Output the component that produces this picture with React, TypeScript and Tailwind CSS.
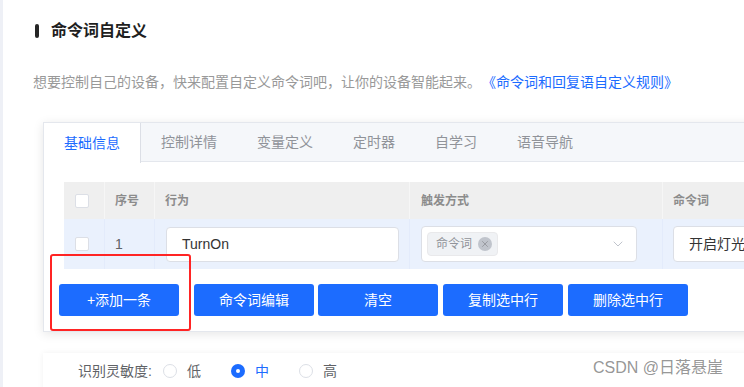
import { ChevronDown, X } from "lucide-react"

const tabs = ["基础信息", "控制详情", "变量定义", "定时器", "自学习", "语音导航"]
const buttons = ["+添加一条", "命令词编辑", "清空", "复制选中行", "删除选中行"]
const levels = [
  { label: "低", checked: false },
  { label: "中", checked: true },
  { label: "高", checked: false },
]

function Checkbox() {
  return <span className="block h-[14px] w-[14px] rounded-[2px] border border-[#dcdfe6] bg-white" />
}

function Radio({ checked }: { checked: boolean }) {
  if (checked) {
    return (
      <span className="flex h-[14px] w-[14px] items-center justify-center rounded-full bg-[#1c6cff]">
        <span className="h-[4px] w-[4px] rounded-full bg-white" />
      </span>
    )
  }
  return <span className="block h-[14px] w-[14px] rounded-full border border-[#dcdfe6] bg-white" />
}

export default function App() {
  return (
    <div className="relative flex h-[387px] w-[744px] overflow-hidden bg-white font-['Liberation_Sans','Noto_Sans_CJK_SC',sans-serif]">
      <div className="w-[3px] shrink-0 bg-[#eef0f6]" />

      <div className="min-w-0 flex-1 pl-[30px]">
        {/* title */}
        <div className="mt-[22px] flex h-[18px] items-center">
          <span className="ml-[2px] h-[14px] w-[4px] rounded-full bg-[#262626]" />
          <span className="ml-[12px] text-[16px] font-bold leading-[18px] text-[#1f1f1f]">命令词自定义</span>
        </div>

        <p className="mt-[32px] whitespace-nowrap text-[14px] leading-[20px] text-[#999]">
          想要控制自己的设备，快来配置自定义命令词吧，让你的设备智能起来。
          <span className="ml-[8px] text-[#1c6cff]">《命令词和回复语自定义规则》</span>
        </p>

        {/* tab card */}
        <div className="mt-[30px] ml-[10px] w-[780px] border border-[#e4e7ed] bg-white shadow-[0_2px_10px_0_rgba(0,0,0,0.1)]">
          <div className="flex h-[39px] border-b border-[#e4e7ed] bg-[#f5f7fa]">
            {tabs.map((tab, i) => (
              <div
                key={tab}
                className={
                  i === 0
                    ? "-mb-px flex h-[40px] items-center border-r border-[#dcdfe6] bg-white px-5 text-[14px] text-[#1c6cff]"
                    : "flex items-center px-5 text-[14px] text-[#909399]"
                }
              >
                {tab}
              </div>
            ))}
          </div>

          <div className="pt-[20px] pb-[15px]">
            {/* table */}
            <div className="ml-[20px]">
              <div className="flex h-[37px] bg-[#efefef] text-[12px] font-bold text-[#8c8c8c]">
                <div className="flex w-[41px] shrink-0 items-center border-r border-[#f6f6f6] pl-[11px]">
                  <Checkbox />
                </div>
                <div className="flex w-[50px] shrink-0 items-center border-r border-[#f6f6f6] pl-[10px]">序号</div>
                <div className="flex w-[255px] shrink-0 items-center border-r border-[#f6f6f6] pl-[10px]">行为</div>
                <div className="flex w-[253px] shrink-0 items-center border-r border-[#f6f6f6] pl-[11px]">触发方式</div>
                <div className="flex flex-1 items-center pl-[10px]">命令词</div>
              </div>

              <div className="flex h-[50px] bg-[#eaf1fd] text-[14px]">
                <div className="flex w-[41px] shrink-0 items-center border-r border-[#e3ebfb] pl-[11px]">
                  <Checkbox />
                </div>
                <div className="flex w-[50px] shrink-0 items-center border-r border-[#e3ebfb] pl-[10px] text-[#606266]">1</div>
                <div className="flex w-[255px] shrink-0 items-center border-r border-[#e3ebfb] pl-[11px]">
                  <div className="flex h-[35px] w-[233px] items-center rounded-[4px] border border-[#dcdfe6] bg-white px-[15px] text-[#333]">
                    TurnOn
                  </div>
                </div>
                <div className="flex w-[253px] shrink-0 items-center border-r border-[#e3ebfb] pl-[11px]">
                  <div className="flex h-[36px] w-[216px] items-center rounded-[4px] border border-[#dcdfe6] bg-white pl-[5px] pr-[10px]">
                    <span className="flex h-[24px] items-center rounded-[4px] border border-[#e9e9eb] bg-[#f0f2f5] pl-[8px] pr-[5px] text-[12px] text-[#909399]">
                      命令词
                      <span className="ml-[6px] flex h-[14px] w-[14px] items-center justify-center rounded-full bg-[#c0c4cc]">
                        <X size={10} strokeWidth={2} className="text-[#909399]" />
                      </span>
                    </span>
                    <ChevronDown size={16} strokeWidth={1.5} className="ml-auto text-[#c0c4cc]" />
                  </div>
                </div>
                <div className="flex min-w-0 flex-1 items-center pl-[10px]">
                  <div className="flex h-[36px] w-[200px] shrink-0 items-center rounded-[4px] border border-[#dcdfe6] bg-white px-[15px] text-[#333]">
                    开启灯光
                  </div>
                </div>
              </div>
            </div>

            {/* actions */}
            <div className="mt-[15px] flex pl-[15px]">
              {buttons.map((label, i) => (
                <button
                  key={label}
                  className={`flex h-[32px] w-[120px] items-center justify-center rounded-[3px] bg-[#1c6cff] text-[14px] text-white ${
                    i === 0 ? "" : i === 1 ? "ml-[15px]" : i === 2 ? "ml-[4px]" : "ml-[5px]"
                  }`}
                >
                  {label}
                </button>
              ))}
            </div>
          </div>
        </div>

        {/* sensitivity card */}
        <div className="mt-[21px] ml-[10px] h-[60px] w-[780px] bg-white pt-[7px] pl-[35px] shadow-[0_0_6px_0_rgba(0,0,0,0.06)]">
          <div className="flex h-[22px] items-center text-[14px] text-[#606266]">
            <span>识别灵敏度:</span>
            <div className="ml-[11px] flex items-center">
              {levels.map((lv, i) => (
                <label key={lv.label} className={`flex items-center ${i > 0 ? "ml-[30px]" : ""}`}>
                  <Radio checked={lv.checked} />
                  <span className={`ml-[10px] ${lv.checked ? "text-[#1c6cff]" : "text-[#606266]"}`}>{lv.label}</span>
                </label>
              ))}
            </div>
          </div>
        </div>
      </div>

      {/* annotation overlay */}
      <div className="pointer-events-none absolute left-[50px] top-[254px] h-[77px] w-[141px] rounded-[3px] border-2 border-[#ff2424]" />

      {/* watermark */}
      <span className="pointer-events-none absolute left-[593px] top-[358px] text-[16px] leading-[20px] text-[#8a8a8a]/90">
        CSDN @日落悬崖
      </span>
    </div>
  )
}
